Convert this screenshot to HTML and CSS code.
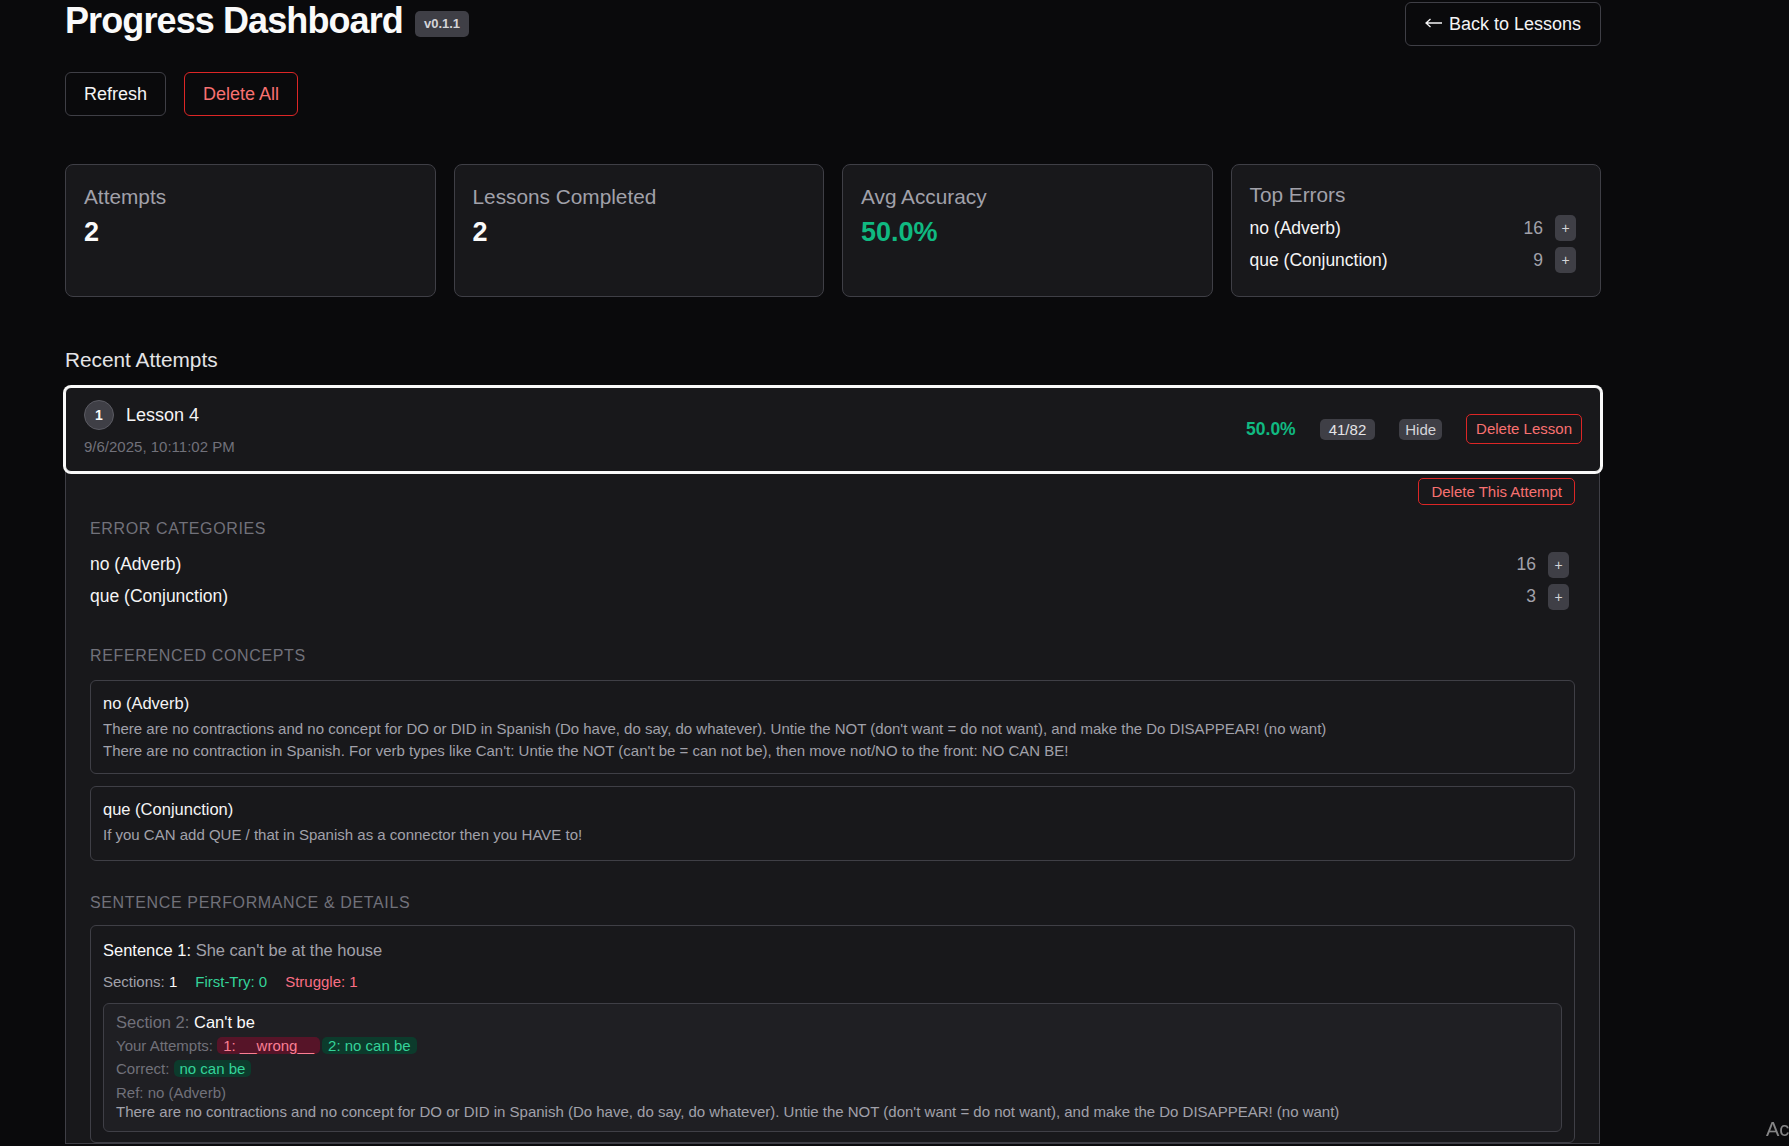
FILE: index.html
```html
<!DOCTYPE html>
<html lang="en">
<head>
<meta charset="utf-8">
<title>Progress Dashboard</title>
<link rel="stylesheet" href="styles.css">
</head>
<body>
<div class="page">
  <header class="header">
    <div class="title-wrap">
      <h1 class="title">Progress Dashboard</h1>
      <span class="version">v0.1.1</span>
    </div>
    <button class="btn btn-back"><svg class="arrow" width="17" height="10" viewBox="0 0 17 10" aria-hidden="true"><path d="M1 5H17M5.5 1L1 5L5.5 9" fill="none" stroke="currentColor" stroke-width="1.3"/></svg>Back to Lessons</button>
  </header>

  <div class="actions">
    <button class="btn">Refresh</button>
    <button class="btn btn-danger">Delete All</button>
  </div>

  <section class="stats">
    <div class="stat-card">
      <div class="stat-label">Attempts</div>
      <div class="stat-value">2</div>
    </div>
    <div class="stat-card">
      <div class="stat-label">Lessons Completed</div>
      <div class="stat-value">2</div>
    </div>
    <div class="stat-card">
      <div class="stat-label">Avg Accuracy</div>
      <div class="stat-value stat-green">50.0%</div>
    </div>
    <div class="stat-card stat-card-errors">
      <div class="stat-label">Top Errors</div>
      <div class="err-list">
        <div class="err-row"><span class="err-name">no (Adverb)</span><span class="err-count">16</span><span class="plus">+</span></div>
        <div class="err-row"><span class="err-name">que (Conjunction)</span><span class="err-count">9</span><span class="plus">+</span></div>
      </div>
    </div>
  </section>

  <h2 class="recent-title">Recent Attempts</h2>

  <div class="attempt-card">
    <div class="attempt-left">
      <div class="attempt-head">
        <span class="num">1</span>
        <span class="lesson-name">Lesson 4</span>
      </div>
      <div class="attempt-date">9/6/2025, 10:11:02 PM</div>
    </div>
    <div class="attempt-right">
      <span class="acc">50.0%</span>
      <span class="chip chip-score">41/82</span>
      <span class="chip chip-hide">Hide</span>
      <button class="btn-sm btn-sm-danger">Delete Lesson</button>
    </div>
  </div>

  <div class="details">
    <div class="details-top">
      <button class="btn-sm btn-sm-danger btn-attempt">Delete This Attempt</button>
    </div>

    <div class="sec-head">Error Categories</div>
    <div class="err-list err-list-detail">
      <div class="err-row"><span class="err-name">no (Adverb)</span><span class="err-count">16</span><span class="plus">+</span></div>
      <div class="err-row"><span class="err-name">que (Conjunction)</span><span class="err-count">3</span><span class="plus">+</span></div>
    </div>

    <div class="sec-head sec-gap">Referenced Concepts</div>
    <div class="concepts">
      <div class="concept">
        <div class="concept-title">no (Adverb)</div>
        <div class="concept-desc">
          <div>There are no contractions and no concept for DO or DID in Spanish (Do have, do say, do whatever). Untie the NOT (don't want = do not want), and make the Do DISAPPEAR! (no want)</div>
          <div>There are no contraction in Spanish. For verb types like Can't: Untie the NOT (can't be = can not be), then move not/NO to the front: NO CAN BE!</div>
        </div>
      </div>
      <div class="concept concept-short">
        <div class="concept-title">que (Conjunction)</div>
        <div class="concept-desc">
          <div>If you CAN add QUE / that in Spanish as a connector then you HAVE to!</div>
        </div>
      </div>
    </div>

    <div class="sec-head sec-gap-lg">Sentence Performance &amp; Details</div>
    <div class="sentence">
      <div class="sentence-title"><span class="s-label">Sentence 1:</span> <span class="s-text">She can't be at the house</span></div>
      <div class="sentence-stats">
        <span class="st-gray">Sections: <span class="st-white">1</span></span>
        <span class="st-green">First-Try: 0</span>
        <span class="st-red">Struggle: 1</span>
      </div>
      <div class="section-box">
        <div class="section-title"><span class="sec-label">Section 2:</span> <span class="sec-text">Can't be</span></div>
        <div class="section-row"><span class="muted">Your Attempts:</span> <span class="pill pill-bad">1: __wrong__</span><span class="pill pill-good">2: no can be</span></div>
        <div class="section-row"><span class="muted">Correct:</span> <span class="pill pill-good">no can be</span></div>
        <div class="section-ref">
          <div class="muted">Ref: no (Adverb)</div>
          <div class="ref-desc">There are no contractions and no concept for DO or DID in Spanish (Do have, do say, do whatever). Untie the NOT (don't want = do not want), and make the Do DISAPPEAR! (no want)</div>
        </div>
      </div>
    </div>
  </div>
</div>
<div class="watermark">Activate Windows</div>
</body>
</html>
```

FILE: styles.css
```css
* { box-sizing: border-box; }

html, body {
  margin: 0;
  padding: 0;
  background: #0a0a0c;
  color: #f4f4f5;
  font-family: "Liberation Sans", Arial, sans-serif;
}

body { overflow-x: hidden; }

.page {
  width: 1536px;
  margin-left: 65px;
  padding-top: 1px;
}

button { font-family: inherit; cursor: pointer; }

.header {
  display: flex;
  justify-content: space-between;
  align-items: flex-start;
}

.title-wrap {
  display: flex;
  align-items: flex-start;
  gap: 12px;
}

.title {
  margin: 0;
  font-size: 36px;
  line-height: 40px;
  font-weight: 700;
  letter-spacing: -0.9px;
  color: #fafafa;
}

.version {
  margin-top: 10px;
  height: 26px;
  line-height: 26px;
  padding: 0 9px;
  border-radius: 5px;
  background: #3f3f46;
  color: #d4d4d8;
  font-size: 13px;
  font-weight: 700;
}

.btn {
  background: transparent;
  border: 1px solid #3f3f46;
  border-radius: 6px;
  color: #f4f4f5;
  font-size: 18px;
  line-height: 26px;
  padding: 8px 18px;
}

.btn-back {
  margin-top: 1px;
  padding: 8px 19px;
}

.arrow {
  margin-right: 7px;
  vertical-align: 2px;
}

.btn-danger {
  border-color: #dc2626;
  color: #f87171;
}

.actions {
  display: flex;
  gap: 18px;
  margin-top: 26px;
}

.stats {
  display: grid;
  grid-template-columns: repeat(4, 1fr);
  gap: 18px;
  margin-top: 48px;
}

.stat-card {
  min-height: 133px;
  background: #18181b;
  border: 1px solid #3f3f46;
  border-radius: 8px;
  padding: 18px;
}

.stat-card-errors { padding-top: 16px; }

.stat-label {
  font-size: 20.8px;
  line-height: 28px;
  color: #a1a1aa;
}

.stat-value {
  margin-top: 4px;
  font-size: 27px;
  line-height: 34px;
  font-weight: 700;
  color: #fafafa;
}

.stat-green { color: #10b981; }

.err-list {
  display: flex;
  flex-direction: column;
  gap: 6px;
  margin-top: 6px;
  padding-right: 6px;
}

.err-row {
  display: flex;
  align-items: center;
  height: 26px;
}

.err-name {
  flex: 1;
  font-size: 17.5px;
  color: #f4f4f5;
}

.err-count {
  font-size: 17.5px;
  color: #a1a1aa;
}

.plus {
  margin-left: 12px;
  width: 21px;
  height: 26px;
  border-radius: 5px;
  background: #3f3f46;
  color: #d4d4d8;
  font-size: 14px;
  display: flex;
  align-items: center;
  justify-content: center;
}

.recent-title {
  margin: 47px 0 0;
  font-size: 20.8px;
  line-height: 31px;
  font-weight: 400;
  color: #e4e4e7;
}

.attempt-card {
  position: relative;
  z-index: 1;
  margin-top: 12px;
  display: flex;
  justify-content: space-between;
  align-items: center;
  background: #18181b;
  border: 1px solid #fafafa;
  box-shadow: 0 0 0 2px #fafafa;
  border-radius: 6px;
  padding: 12px 18px;
}

.attempt-head {
  display: flex;
  align-items: center;
  gap: 12px;
}

.num {
  width: 30px;
  height: 30px;
  border-radius: 50%;
  background: #3f3f46;
  border: 1px solid #5b5b63;
  color: #fafafa;
  font-size: 14px;
  font-weight: 700;
  display: flex;
  align-items: center;
  justify-content: center;
}

.lesson-name {
  font-size: 18px;
  color: #f4f4f5;
}

.attempt-date {
  margin-top: 6px;
  font-size: 15px;
  line-height: 22.5px;
  color: #71717a;
}

.attempt-right {
  display: flex;
  align-items: center;
  gap: 24px;
}

.acc {
  font-size: 17.5px;
  font-weight: 700;
  color: #10b981;
}

.chip {
  font-size: 15px;
  line-height: 21px;
  border-radius: 5px;
  background: #3f3f46;
  color: #e4e4e7;
}

.chip-score { padding: 0 9px; }
.chip-hide { padding: 0 6px; color: #d4d4d8; }

.btn-sm {
  background: transparent;
  font-size: 15px;
  line-height: 18px;
  padding: 5px 9px;
  border-radius: 5px;
}

.btn-sm-danger {
  border: 1px solid #dc2626;
  color: #f87171;
}

.btn-attempt {
  line-height: 17px;
  padding: 4px 12px;
}

.details {
  background: #18181b;
  border: 1px solid #3f3f46;
  border-top: none;
  margin-right: 1px;
  padding: 6px 24px 0;
}

.details-top {
  display: flex;
  justify-content: flex-end;
}

.sec-head {
  margin-top: 12px;
  font-size: 16px;
  line-height: 24px;
  text-transform: uppercase;
  letter-spacing: 0.04em;
  color: #71717a;
}

.sec-gap { margin-top: 28px; }
.sec-gap-lg { margin-top: 29.5px; }

.err-list-detail {
  margin-top: 11px;
  padding-bottom: 6px;
}

.concepts {
  margin-top: 12px;
  display: flex;
  flex-direction: column;
  gap: 12px;
}

.concept {
  border: 1px solid #3f3f46;
  border-radius: 6px;
  padding: 10px 12px 10px;
}

.concept-short { padding-bottom: 14px; }

.concept-title {
  font-size: 16.5px;
  line-height: 24px;
  color: #f4f4f5;
}

.concept-desc {
  margin-top: 3px;
  font-size: 15px;
  line-height: 22.5px;
  color: #a1a1aa;
}

.sentence {
  margin-top: 10px;
  border: 1px solid #3f3f46;
  border-radius: 6px;
  padding: 12px 12px 10px;
}

.sentence-title {
  font-size: 16.5px;
  line-height: 24px;
}

.s-label { color: #fafafa; }
.s-text { color: #a1a1aa; }

.sentence-stats {
  margin-top: 9px;
  display: flex;
  gap: 18px;
  font-size: 15px;
  line-height: 22.5px;
}

.st-gray { color: #a1a1aa; }
.st-white { color: #fafafa; }
.st-green { color: #34d399; }
.st-red { color: #fb6f84; }

.section-box {
  margin-top: 10px;
  background: #1f1f23;
  border: 1px solid #3f3f46;
  border-radius: 6px;
  padding: 7px 12px 10px;
}

.section-title {
  font-size: 16.5px;
  line-height: 22px;
}

.sec-label { color: #71717a; }
.sec-text { color: #fafafa; }

.section-row {
  margin-top: 2px;
  font-size: 15px;
  line-height: 21px;
}

.muted { color: #71717a; }

.pill {
  display: inline-block;
  padding: 0 6px;
  border-radius: 5px;
  line-height: 17px;
  margin-right: 2px;
}

.pill-bad { background: #561428; color: #fb7f94; }
.pill-good { background: #0c3b2c; color: #34d399; }

.section-ref {
  margin-top: 5px;
  font-size: 15px;
  line-height: 18.5px;
}

.ref-desc { color: #a1a1aa; }

.watermark {
  position: fixed;
  left: 1766px;
  top: 1117px;
  font-size: 20px;
  line-height: 24px;
  white-space: nowrap;
  color: rgba(255, 255, 255, 0.5);
}
```
